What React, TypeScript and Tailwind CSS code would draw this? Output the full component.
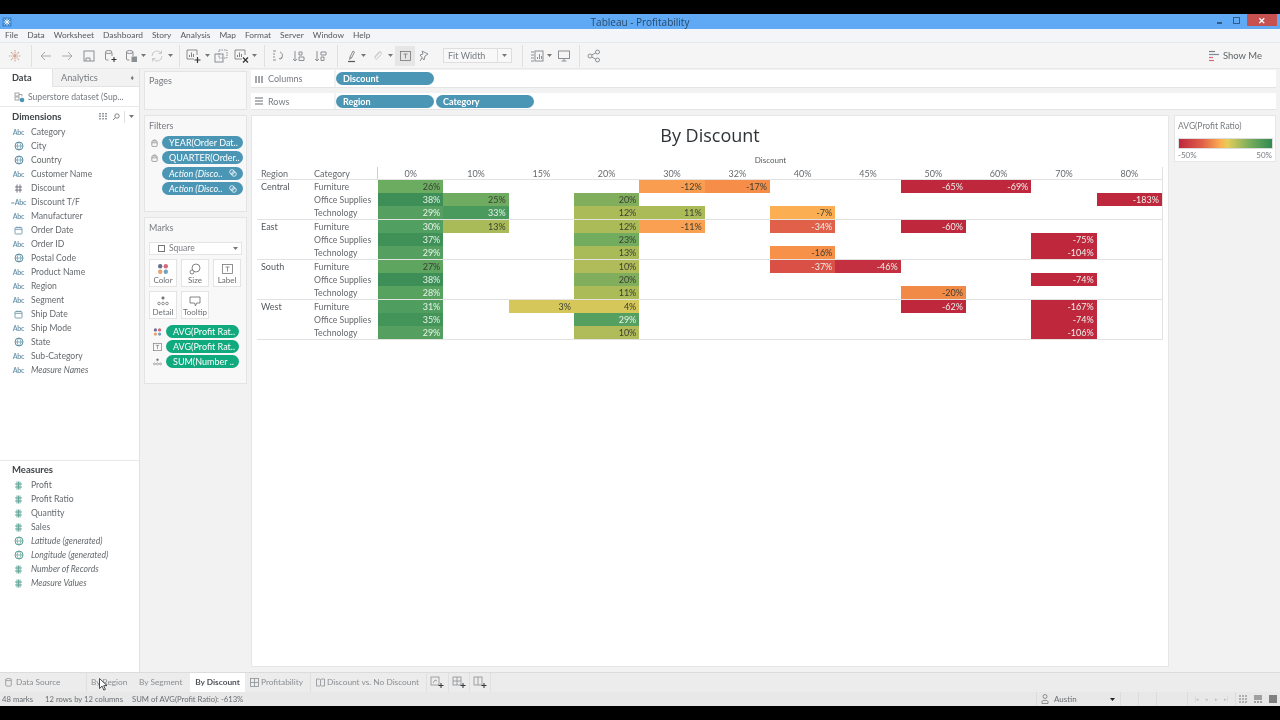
import React from "react";

const G = "#8a8f94";
type IP = { c?: string; s?: number };

const Svg = ({ s = 14, children }: { s?: number; children: React.ReactNode }) => (
  <svg width={s} height={s} viewBox="0 0 14 14" fill="none" stroke={G} strokeWidth="1" className="shrink-0">
    {children}
  </svg>
);

const Caret = () => (
  <svg width="5" height="3" viewBox="0 0 5 3" className="shrink-0"><path d="M0 0h5L2.5 3z" fill="#777" /></svg>
);

const Globe = ({ c = "#5c8fa6" }: IP) => (
  <svg width="10" height="10" viewBox="0 0 10 10" fill="none" stroke={c} strokeWidth="1">
    <circle cx="5" cy="5" r="4" /><path d="M1 5h8M5 1c-2.4 2.4-2.4 5.6 0 8M5 1c2.4 2.4 2.4 5.6 0 8" strokeWidth=".7" />
  </svg>
);
const Hash = ({ c = "#5c8fa6", dbl = false }: IP & { dbl?: boolean }) => (
  <svg width="9" height="9" viewBox="0 0 9 9" fill="none" stroke={c} strokeWidth=".9">
    <path d="M1 3h7M1 6h7" />
    {dbl ? <path d="M3 .5v8M4.5 .5v8M6 .5v8" /> : <path d="M3 .5v8M6 .5v8" />}
  </svg>
);
const Cal = ({ c = "#6f97ab" }: IP) => (
  <svg width="9" height="9" viewBox="0 0 9 9" fill="none" stroke={c} strokeWidth=".9">
    <rect x="1" y="1.5" width="7" height="6.5" rx=".8" /><path d="M1 3.3h7M3 .5v1.5M6 .5v1.5" />
  </svg>
);
const Abc = ({ pre = false }: { pre?: boolean }) => (
  <span className="text-[7px] leading-none font-bold text-[#6f98ad] tracking-[-0.2px]">{pre ? "=Abc" : "Abc"}</span>
);

type Kind = "abc" | "eq" | "globe" | "hash" | "cal" | "mhash" | "mglobe";
const FieldIcon = ({ k }: { k: Kind }) => {
  if (k === "abc") return <Abc />;
  if (k === "eq") return <Abc pre />;
  if (k === "globe") return <Globe />;
  if (k === "hash") return <Hash c="#667" />;
  if (k === "cal") return <Cal />;
  if (k === "mhash") return <Hash c="#5aa193" dbl />;
  return <Globe c="#5aa193" />;
};

const Field = ({ k, name, it = false }: { k: Kind; name: string; it?: boolean }) => (
  <div className="flex items-center h-[14px]">
    <div className="w-[31px] pl-[9px] pr-[3px] flex justify-center items-center shrink-0"><FieldIcon k={k} /></div>
    <span className={`text-[8.6px] leading-none text-[#666a6e] whitespace-nowrap ${it ? "italic" : ""}`}>{name}</span>
  </div>
);

const dims: [Kind, string, boolean?][] = [
  ["abc", "Category"], ["globe", "City"], ["globe", "Country"], ["abc", "Customer Name"], ["hash", "Discount"],
  ["eq", "Discount T/F"], ["abc", "Manufacturer"], ["cal", "Order Date"], ["abc", "Order ID"], ["globe", "Postal Code"],
  ["abc", "Product Name"], ["abc", "Region"], ["abc", "Segment"], ["cal", "Ship Date"], ["abc", "Ship Mode"],
  ["globe", "State"], ["abc", "Sub-Category"], ["abc", "Measure Names", true],
];
const meas: [Kind, string, boolean?][] = [
  ["mhash", "Profit"], ["mhash", "Profit Ratio"], ["mhash", "Quantity"], ["mhash", "Sales"],
  ["mglobe", "Latitude (generated)", true], ["mglobe", "Longitude (generated)", true],
  ["mhash", "Number of Records", true], ["mhash", "Measure Values", true],
];

const Dots = () => (
  <svg width="12" height="12" viewBox="0 0 12 12">
    <circle cx="3.2" cy="3.2" r="2.2" fill="#6a6f8e" /><circle cx="8.8" cy="3.2" r="2.2" fill="#d9687a" />
    <circle cx="3.2" cy="8.8" r="2.2" fill="#eda06a" /><circle cx="8.8" cy="8.8" r="2.2" fill="#6fa3c4" />
  </svg>
);
const LabelT = () => (
  <svg width="11" height="10" viewBox="0 0 11 10" fill="none" stroke="#777" strokeWidth=".8">
    <rect x=".5" y=".5" width="10" height="9" /><path d="M3.5 3h4M5.5 3v4.5" />
  </svg>
);
const DetailI = () => (
  <svg width="12" height="10" viewBox="0 0 12 10" fill="none" stroke="#777" strokeWidth=".8">
    <circle cx="6" cy="2" r="1.2" fill="#777" /><circle cx="2" cy="7.5" r="1.3" /><circle cx="6" cy="7.5" r="1.3" /><circle cx="10" cy="7.5" r="1.3" />
  </svg>
);
const SizeI = () => (
  <svg width="12" height="12" viewBox="0 0 12 12" fill="none" stroke="#777" strokeWidth=".9">
    <circle cx="7" cy="5" r="4" /><circle cx="3" cy="9" r="2" fill="#fff" />
  </svg>
);
const TipI = () => (
  <svg width="12" height="11" viewBox="0 0 12 11" fill="none" stroke="#777" strokeWidth=".9">
    <path d="M1 1h10v6H7.5L6.5 10 5.5 7H1z" />
  </svg>
);

const MarkBtn = ({ label, children }: { label: string; children: React.ReactNode }) => (
  <div className="w-[28px] h-[28px] bg-white border border-[#e4e4e4] flex flex-col items-center">
    <div className="h-[15px] flex items-center justify-center pt-[3px]">{children}</div>
    <span className="text-[8px] leading-[11px] text-[#6a6e72] whitespace-nowrap">{label}</span>
  </div>
);

const Pill = ({ text, bg, w, italic = false, link = false }: { text: string; bg: string; w: string; italic?: boolean; link?: boolean }) => (
  <div className={`${w} ${bg} h-[13px] rounded-full flex items-center pl-[7px] pr-[6px] justify-between text-white text-[9px] leading-none whitespace-nowrap overflow-hidden ${italic ? "italic" : ""}`}>
    <span>{text}</span>
    {link && (
      <svg width="8" height="8" viewBox="0 0 8 8" fill="none" stroke="#fff" strokeWidth=".8"><circle cx="3" cy="3" r="2.3" /><circle cx="5" cy="5" r="2.3" /></svg>
    )}
  </div>
);

const Lock = () => (
  <svg width="7" height="8" viewBox="0 0 7 8" fill="none" stroke="#8a8f94" strokeWidth=".8" className="shrink-0">
    <rect x=".8" y="2" width="5.4" height="5.4" rx=".8" /><path d="M1 3.8h5M2 2c0-1.6 3-1.6 3 0" />
  </svg>
);

const ShelfPill = ({ text, w = "w-[98px]" }: { text: string; w?: string }) => (
  <div className={`${w} h-[13px] rounded-full bg-[#4a96b4] text-white text-[9px] font-bold leading-none flex items-center pl-[7px]`}>{text}</div>
);

const Cols = ["0%", "10%", "15%", "20%", "30%", "32%", "40%", "45%", "50%", "60%", "70%", "80%"];
type Row = { cat: string; cells: Record<number, number> };
const data: { region: string; rows: Row[] }[] = [
  { region: "Central", rows: [
    { cat: "Furniture", cells: { 0: 26, 4: -12, 5: -17, 8: -65, 9: -69 } },
    { cat: "Office Supplies", cells: { 0: 38, 1: 25, 3: 20, 11: -183 } },
    { cat: "Technology", cells: { 0: 29, 1: 33, 3: 12, 4: 11, 6: -7 } },
  ] },
  { region: "East", rows: [
    { cat: "Furniture", cells: { 0: 30, 1: 13, 3: 12, 4: -11, 6: -34, 8: -60 } },
    { cat: "Office Supplies", cells: { 0: 37, 3: 23, 10: -75 } },
    { cat: "Technology", cells: { 0: 29, 3: 13, 6: -16, 10: -104 } },
  ] },
  { region: "South", rows: [
    { cat: "Furniture", cells: { 0: 27, 3: 10, 6: -37, 7: -46 } },
    { cat: "Office Supplies", cells: { 0: 38, 3: 20, 10: -74 } },
    { cat: "Technology", cells: { 0: 28, 3: 11, 8: -20 } },
  ] },
  { region: "West", rows: [
    { cat: "Furniture", cells: { 0: 31, 2: 3, 3: 4, 8: -62, 10: -167 } },
    { cat: "Office Supplies", cells: { 0: 35, 3: 29, 10: -74 } },
    { cat: "Technology", cells: { 0: 29, 3: 10, 10: -106 } },
  ] },
];

const colorFor = (v: number): string => {
  const m: Record<number, string> = {
    26: "#6bac60", 38: "#3d8f57", 29: "#55a061", 25: "#6fab60", 20: "#80ae5c", 33: "#4a9a5e", 12: "#aabb58", 11: "#abbb58",
    30: "#52a061", 13: "#a8bb58", 37: "#3f9158", 23: "#72ac5f", 27: "#5ea55f", 10: "#b0bc59", 28: "#58a260", 31: "#4f9e60",
    35: "#439459", 3: "#d6c75a", 4: "#d6c75a",
    [-7]: "#fbae52", [-11]: "#f9a052", [-12]: "#f99d50", [-16]: "#f79049", [-17]: "#f68e49", [-20]: "#f28a47", [-34]: "#e0604a", [-37]: "#da4f46", [-46]: "#c4303f",
  };
  return m[v] ?? "#bf273d";
};
const lightText = (v: number) =>
  v <= -34 || [38, 29, 33, 30, 37, 28, 31, 35].includes(v);

const TabIconSheet = () => (
  <svg width="9" height="9" viewBox="0 0 9 9" fill="none" stroke="#8a8f94" strokeWidth=".8"><rect x=".5" y=".5" width="8" height="8" /><path d="M.5 4.5h8M4.5 .5v8" /></svg>
);
const TabIconBook = () => (
  <svg width="9" height="9" viewBox="0 0 9 9" fill="none" stroke="#8a8f94" strokeWidth=".8"><path d="M.5 1h3l1 1 1-1h3v7h-3l-1-.5-1 .5h-3zM4.5 2v5.5" /></svg>
);
const AddTab = ({ kind }: { kind: "a" | "b" | "c" }) => (
  <svg width="15" height="13" viewBox="0 0 15 13" fill="none" stroke="#8a8f94" strokeWidth=".8">
    <rect x="1" y="1" width="8" height="8" />
    {kind === "a" && <path d="M3 7l2-3 2 1" />}
    {kind === "b" && <path d="M1 5h8M5 1v8" />}
    {kind === "c" && <path d="M5 1v8" />}
    <path d="M11 7v5M8.5 9.5h5" stroke="#333" strokeWidth="1" />
  </svg>
);

const Sep = ({ ml }: { ml: string }) => <div className={`w-px h-[22px] bg-[#e0e0e0] ${ml} shrink-0`} />;
const Tool = ({ ml, children }: { ml: string; children: React.ReactNode }) => <div className={`w-[14px] h-[22px] ${ml} flex items-center justify-center shrink-0`}>{children}</div>;
const Drop = ({ ml }: { ml: string }) => <div className={`w-[6px] h-[22px] ${ml} flex items-center justify-center shrink-0`}><Caret /></div>;

const BarAdd = ({ mark }: { mark: "plus" | "x" }) => (
  <svg width="15" height="14" viewBox="0 0 15 14" fill="none" stroke="#7d8287" strokeWidth=".9" className="shrink-0">
    <path d="M11 1H1v9h7M11 1v5" />
    <path d="M3.5 8V6M5.5 8V3.5M7.5 8V5" strokeWidth="1" />
    {mark === "plus" && <path d="M11.5 8v6M8.5 11h6" stroke="#333" strokeWidth="1.2" />}
    {mark === "x" && <path d="M9 8.5l5 5M14 8.5l-5 5" stroke="#333" strokeWidth="1.2" />}
  </svg>
);

export default function App() {
  return (
    <div className="w-[1280px] h-[720px] overflow-hidden flex flex-col bg-black relative font-['Lato','Noto_Sans',sans-serif] blur-[0.3px]">
      <div className="h-[14px] bg-black shrink-0" />
      {/* title */}
      <div className="h-[15px] bg-[#5fa9f5] flex items-center justify-between shrink-0">
        <div className="pl-[2px] w-[200px]">
          <svg width="10" height="10" viewBox="0 0 10 10" stroke="#fff" strokeWidth=".9" fill="none"><rect x=".5" y=".5" width="9" height="9" fill="#3f86cc" stroke="none" /><path d="M5 1.5v7M1.5 5h7M2.5 2.5l5 5M7.5 2.5l-5 5" /></svg>
        </div>
        <span className="text-[10px] leading-none text-[#274a6b] font-['Open_Sans',sans-serif]">Tableau - Profitability</span>
        <div className="w-[200px] flex items-start justify-end h-full pr-[3px]">
          <div className="w-[5px] h-[2px] bg-[#335b85] mt-[8px] mr-[11px]" />
          <div className="w-[7px] h-[7px] border border-[#335b85] mt-[3px] mr-[7px]" />
          <div className="w-[30px] h-[12px] bg-[#c75050] flex items-center justify-center text-white text-[9px] font-bold leading-none">✕</div>
        </div>
      </div>
      {/* menu */}
      <div className="h-[14px] bg-[#f3f5f8] flex items-center pl-[5px] gap-[9px] shrink-0 text-[8.4px] leading-none text-[#555a60] border-b border-[#e6e8ea]">
        {["File", "Data", "Worksheet", "Dashboard", "Story", "Analysis", "Map", "Format", "Server", "Window", "Help"].map((m) => (
          <span key={m}>{m}</span>
        ))}
      </div>
      {/* toolbar */}
      <div className="h-[26px] bg-[#f5f5f5] flex items-center shrink-0 pl-[4px] border-b border-[#e8e8e8]">
        <div className="w-[22px] h-[22px] flex items-center justify-center shrink-0">
          <svg width="12" height="12" viewBox="0 0 12 12" stroke="#d0a68f" strokeWidth="1.1" strokeDasharray="1.4 .6"><path d="M6 0v12M0 6h12M2 2l8 8M10 2l-8 8" /></svg>
        </div>
        <Sep ml="ml-[5px]" />
        <Tool ml="ml-[7px]"><Svg><path d="M12 7H2M6 3L2 7l4 4" stroke="#a5a9ad" /></Svg></Tool>
        <Tool ml="ml-[7px]"><Svg><path d="M2 7h10M8 3l4 4-4 4" stroke="#a5a9ad" /></Svg></Tool>
        <Tool ml="ml-[8px]"><Svg><rect x="2" y="2" width="10" height="10" /><path d="M4 12V9h4v3" /></Svg></Tool>
        <Tool ml="ml-[7px]"><Svg><path d="M2.5 4v6c0 1 1 1 3 1M9 4v3" /><ellipse cx="5.7" cy="3" rx="3.3" ry="1.5" /><path d="M11 8v5M8.5 10.5h5" stroke="#333" strokeWidth="1.1" /></Svg></Tool>
        <Tool ml="ml-[7px]"><Svg><path d="M2.5 3v7c0 1 1 1 3 1M9 3v4" /><ellipse cx="5.7" cy="3" rx="3.3" ry="1.5" /><rect x="8" y="8" width="4.5" height="4.5" fill="#8a8f94" /></Svg></Tool>
        <Drop ml="ml-[2px]" />
        <Tool ml="ml-[4px]"><Svg><path d="M2 7a5 5 0 0 1 9-3M12 7a5 5 0 0 1-9 3" stroke="#c5c8cb" /><path d="M11.5 1.5v3h-3M2.5 12.5v-3h3" stroke="#c5c8cb" /></Svg></Tool>
        <Drop ml="ml-[3px]" />
        <Sep ml="ml-[6px]" />
        <Tool ml="ml-[6px]"><BarAdd mark="plus" /></Tool>
        <Drop ml="ml-[4px]" />
        <Tool ml="ml-[4px]"><Svg><rect x="5" y="1" width="8" height="8" strokeDasharray="1.5 1" /><rect x="1" y="5" width="8" height="8" /></Svg></Tool>
        <Tool ml="ml-[6px]"><BarAdd mark="x" /></Tool>
        <Drop ml="ml-[3px]" />
        <Sep ml="ml-[7px]" />
        <Tool ml="ml-[6px]"><Svg><path d="M2 2h3M2 5h2M2 8h2M9 3c3 1 3 5 1 7M10 10l-2-.5M10 10l.5-2" /><path d="M2 11h3" /></Svg></Tool>
        <Tool ml="ml-[7px]"><Svg><path d="M3 2v10M1 10l2 2 2-2" /><path d="M7 3h3v3H7zM7 8h5v3.5H7z" /></Svg></Tool>
        <Tool ml="ml-[8px]"><Svg><path d="M3 2v10M1 10l2 2 2-2" /><path d="M7 3h5v3H7zM7 8h3v3.5H7z" /></Svg></Tool>
        <Sep ml="ml-[9px]" />
        <Tool ml="ml-[7px]"><Svg><path d="M5 8l3-6 1.5 1L6.5 9zM5 8l-.5 2.5L6.5 9" /><path d="M3 12.5h7" stroke="#555" strokeWidth="1.2" /></Svg></Tool>
        <Drop ml="ml-[1px]" />
        <Tool ml="ml-[5px]"><Svg><path d="M9 3L4.5 8c-1 1.5 1 3 2 1.5L10 5.5c1.5-2-1-4-2.5-2L3.5 8" stroke="#c5c8cb" /></Svg></Tool>
        <Drop ml="ml-[2px]" />
        <div className="ml-[2px] w-[20px] h-[20px] bg-[#e6e6e6] flex items-center justify-center shrink-0">
          <LabelT />
        </div>
        <Tool ml="ml-[2px]"><Svg><path d="M5 2l6 3-3 2-1 4-4-5 3-1zM3 12l2-3" /></Svg></Tool>
        <div className="ml-[12px] w-[69px] h-[15px] bg-[#f8f8f8] border border-[#dedede] flex items-center justify-between pl-[4px] pr-[4px] text-[9px] text-[#777b80] leading-none shrink-0">
          <span>Fit Width</span><div className="border-l border-[#dedede] h-full flex items-center pl-[4px]"><Caret /></div>
        </div>
        <Sep ml="ml-[10px]" />
        <Tool ml="ml-[7px]"><Svg><path d="M1 3h3M1 6h3M1 9h3M1 12h3" /><rect x="5" y="2" width="8" height="10" /><path d="M7.5 10V8M9.5 10V5M11.5 10V7" /></Svg></Tool>
        <Drop ml="ml-[2px]" />
        <Tool ml="ml-[5px]"><Svg><rect x="1.5" y="2" width="11" height="7.5" /><path d="M7 9.5V12M4.5 12h5" /></Svg></Tool>
        <Sep ml="ml-[8px]" />
        <Tool ml="ml-[7px]"><Svg><circle cx="3" cy="7" r="2" /><circle cx="10.5" cy="3" r="2" /><circle cx="10.5" cy="11" r="2" /><path d="M4.8 6l4-2.2M4.8 8l4 2.2" /></Svg></Tool>
        <div className="flex-1" />
        <div className="flex items-center gap-[4px] pr-[18px] text-[9.5px] text-[#5f6468] leading-none">
          <svg width="10" height="12" viewBox="0 0 10 12" strokeWidth="1.2"><path d="M0 1.5h6" stroke="#7a7f88" /><path d="M0 4.5h10" stroke="#7a8aa0" /><path d="M0 7.5h4" stroke="#d9687a" /><path d="M0 10.5h5" stroke="#d9687a" /></svg>
          <span>Show Me</span>
        </div>
      </div>

      {/* body */}
      <div className="h-[603px] flex bg-[#f2f2f2] shrink-0">
        {/* data pane */}
        <div className="w-[140px] bg-white border-r border-[#e2e2e2] flex flex-col shrink-0">
          <div className="h-[18px] flex text-[9.2px] leading-none shrink-0">
            <div className="w-[52px] flex items-center pl-[12px] font-bold text-[#3f4448] bg-white">Data</div>
            <div className="flex-1 flex items-center justify-between pl-[8px] pr-[5px] bg-[#f2f2f2] border-b border-l border-[#e4e4e4] text-[#777b80]">
              <span>Analytics</span>
              <span className="text-[7px]">♦</span>
            </div>
          </div>
          <div className="h-[20px] flex items-center pl-[14px] pt-[2px] gap-[3px] border-b border-[#e8e8e8] text-[8.6px] text-[#777b80] leading-none shrink-0">
            <svg width="11" height="11" viewBox="0 0 11 11" fill="none" stroke="#8a8f94" strokeWidth=".8"><rect x="1" y="1" width="4" height="3" /><rect x="1" y="5" width="4" height="3" /><path d="M5 2.5h3v2" /><circle cx="8" cy="8" r="2.3" fill="#4a96b4" stroke="none" /></svg>
            <span>Superstore dataset (Sup...</span>
          </div>
          <div className="h-[354px] shrink-0 border-b border-[#e8e8e8] flex flex-col">
            <div className="h-[17px] flex items-center justify-between pl-[12px] pr-[5px] mt-[1px] shrink-0">
              <span className="text-[9.5px] font-bold leading-none text-[#3f4448]">Dimensions</span>
              <div className="flex items-center gap-[4px]">
                <svg width="9" height="7" viewBox="0 0 9 7" fill="#9a9ea2"><path d="M0 0h2v1.5H0zM3 0h2v1.5H3zM6 0h2v1.5H6zM0 2.5h2V4H0zM3 2.5h2V4H3zM6 2.5h2V4H6zM0 5h2v1.5H0zM3 5h2v1.5H3zM6 5h2v1.5H6z" /></svg>
                <svg width="8" height="8" viewBox="0 0 8 8" fill="none" stroke="#777" strokeWidth=".9"><circle cx="5" cy="3" r="2.2" /><path d="M3.4 4.6L1 7" /></svg>
                <div className="w-px h-[12px] bg-[#e0e0e0]" />
                <Caret />
              </div>
            </div>
            <div className="flex flex-col">
              {dims.map(([k, n, it]) => <Field key={n} k={k} name={n} it={it} />)}
            </div>
          </div>
          <div className="h-[16px] flex items-center pl-[12px] mt-[1px] pb-[1px] text-[9.5px] font-bold text-[#3f4448] leading-none shrink-0">Measures</div>
          <div className="flex flex-col">
            {meas.map(([k, n, it]) => <Field key={n} k={k} name={n} it={it} />)}
          </div>
        </div>

        {/* cards column */}
        <div className="w-[103px] ml-[4px] flex flex-col gap-[5px] pt-[2px] shrink-0">
          <div className="h-[39px] bg-[#f8f8f8] border border-[#e4e4e4] pl-[4px] pt-[4px] text-[9px] leading-none text-[#777b80]">Pages</div>
          <div className="h-[97px] bg-[#f8f8f8] border border-[#e4e4e4] pt-[5px] flex flex-col">
            <span className="pl-[4px] text-[9px] leading-none text-[#777b80]">Filters</span>
            <div className="flex flex-col gap-[2.4px] mt-[6px] pl-[6px]">
              <div className="flex items-center"><div className="w-[11px]"><Lock /></div><Pill text="YEAR(Order Dat.." bg="bg-[#4a96b4]" w="w-[81px]" /></div>
              <div className="flex items-center"><div className="w-[11px]"><Lock /></div><Pill text="QUARTER(Order.." bg="bg-[#4a96b4]" w="w-[81px]" /></div>
              <div className="flex items-center"><div className="w-[11px]" /><Pill text="Action (Disco.." bg="bg-[#4a96b4]" w="w-[81px]" italic link /></div>
              <div className="flex items-center"><div className="w-[11px]" /><Pill text="Action (Disco.." bg="bg-[#4a96b4]" w="w-[81px]" italic link /></div>
            </div>
          </div>
          <div className="h-[167px] bg-[#f8f8f8] border border-[#e4e4e4] pt-[5px] flex flex-col">
            <span className="pl-[4px] text-[9px] leading-none text-[#777b80]">Marks</span>
            <div className="ml-[4px] mt-[10px] w-[93px] h-[13px] bg-white border border-[#e4e4e4] flex items-center justify-between pl-[8px] pr-[3px] text-[8.5px] text-[#777b80] leading-none">
              <span className="flex items-center gap-[4px]"><span className="w-[7px] h-[7px] border border-[#777]" />Square</span>
              <Caret />
            </div>
            <div className="ml-[4px] mt-[4px] flex flex-wrap gap-x-[4px] gap-y-[4px] w-[93px]">
              <MarkBtn label="Color"><Dots /></MarkBtn>
              <MarkBtn label="Size"><SizeI /></MarkBtn>
              <MarkBtn label="Label"><LabelT /></MarkBtn>
              <MarkBtn label="Detail"><DetailI /></MarkBtn>
              <MarkBtn label="Tooltip"><TipI /></MarkBtn>
            </div>
            <div className="flex flex-col gap-[2px] mt-[6px] pl-[8px]">
              <div className="flex items-center gap-[4px]"><div className="w-[9px] flex justify-center [&>svg]:w-[10px]"><Dots /></div><Pill text="AVG(Profit Rat.." bg="bg-[#11a97e]" w="w-[73px]" /></div>
              <div className="flex items-center gap-[4px]"><div className="w-[9px] flex justify-center [&>svg]:w-[9px]"><LabelT /></div><Pill text="AVG(Profit Rat.." bg="bg-[#11a97e]" w="w-[73px]" /></div>
              <div className="flex items-center gap-[4px]"><div className="w-[9px] flex justify-center [&>svg]:w-[10px]"><DetailI /></div><Pill text="SUM(Number .." bg="bg-[#11a97e]" w="w-[73px]" /></div>
            </div>
          </div>
        </div>

        {/* main */}
        <div className="w-[1025px] ml-[4px] pt-[1px] flex flex-col shrink-0">
          <div className="h-[18px] flex items-center bg-white border-b border-[#e4e4e4] shrink-0">
            <div className="w-[85px] h-full flex items-center gap-[5px] pl-[4px] border-r-[2px] border-[#f2f2f2] text-[9px] leading-none text-[#777b80]">
              <svg width="8" height="8" viewBox="0 0 8 8" stroke="#6a6e72" strokeWidth="1.2"><path d="M1 1v7M4 1v7M7 1v7" /></svg>Columns
            </div>
            <ShelfPill text="Discount" />
          </div>
          <div className="h-[17px] mt-[5px] flex items-center bg-white border-b border-[#e4e4e4] shrink-0">
            <div className="w-[85px] h-full flex items-center gap-[5px] pl-[4px] border-r-[2px] border-[#f2f2f2] text-[9px] leading-none text-[#777b80]">
              <svg width="8" height="8" viewBox="0 0 8 8" stroke="#6a6e72" strokeWidth="1.2"><path d="M0 1h8M0 4h8M0 7h8" /></svg>Rows
            </div>
            <div className="flex gap-[2px]"><ShelfPill text="Region" /><ShelfPill text="Category" /></div>
          </div>
          <div className="flex gap-[5px] mt-[5px] shrink-0">
            {/* canvas */}
            <div className="w-[918px] h-[552px] bg-white border border-[#e6e6e6] px-[5px] flex flex-col">
              <div className="h-[37px] flex items-end justify-center shrink-0">
                <span className="text-[18px] leading-[26px] text-[#2e3338] font-['Open_Sans',sans-serif] translate-y-[-5px]">By Discount</span>
              </div>
              <div className="h-[14px] pl-[121px] w-[906px] flex items-center justify-center text-[8px] leading-none text-[#555a5e] shrink-0">Discount</div>
              <div className="w-[906px] border-r border-[#e2e2e2] flex flex-col shrink-0">
                <div className="h-[13px] box-border flex items-center text-[9px] leading-none text-[#666a6e] border-b border-[#e2e2e2]">
                  <span className="w-[57px] pl-[4px]">Region</span>
                  <span className="w-[64px]">Category</span>
                  <div className="flex-1 -ml-px grid grid-cols-12 border-l border-[#cfcfcf] h-full items-center text-center">
                    {Cols.map((c) => <span key={c}>{c}</span>)}
                  </div>
                </div>
                {data.map((g) => (
                  <div key={g.region} className="h-[40px] box-border flex border-b border-[#e2e2e2]">
                    <span className="w-[57px] pl-[4px] pt-[2px] text-[9px] leading-none text-[#555a5e] shrink-0">{g.region}</span>
                    <div className="flex-1 flex flex-col">
                      {g.rows.map((r) => (
                        <div key={r.cat} className="flex-1 flex items-center">
                          <span className="w-[64px] pt-[1px] text-[8.7px] leading-none text-[#666a6e] shrink-0">{r.cat}</span>
                          <div className="flex-1 grid grid-cols-12 h-full">
                            {Cols.map((_, i) => {
                              const v = r.cells[i];
                              if (v === undefined) return <div key={i} />;
                              return (
                                <div
                                  key={i}
                                  style={{ backgroundColor: colorFor(v) }}
                                  className={`flex items-center justify-end pr-[3px] text-[9px] leading-none ${lightText(v) ? "text-[#e9f2ea]" : "text-[#3b3f33]"}`}
                                >
                                  {v}%
                                </div>
                              );
                            })}
                          </div>
                        </div>
                      ))}
                    </div>
                  </div>
                ))}
              </div>
            </div>
            {/* legend */}
            <div className="w-[102px] h-[47px] bg-white border border-[#e6e6e6] px-[3px] pt-[6px] flex flex-col">
              <span className="text-[8.5px] leading-none text-[#777b80]">AVG(Profit Ratio)</span>
              <div className="h-[11px] mt-[7px] w-[95px] border border-[#ddd] bg-[linear-gradient(to_right,#bf273d,#e0604a_25%,#fbb050_45%,#e5cd5a_52%,#7cae5c_75%,#2f8a52)]" />
              <div className="flex justify-between text-[8px] leading-none text-[#777b80] mt-[2px]"><span>-50%</span><span>50%</span></div>
            </div>
          </div>
        </div>
      </div>

      {/* tabs */}
      <div className="h-[20px] bg-[#ececec] border-t border-[#dcdcdc] flex items-stretch text-[8.3px] leading-none text-[#8a8e92] whitespace-nowrap shrink-0">
        <div className="w-[87px] flex items-center gap-[4px] pl-[5px] border-r border-[#e0e0e0]">
          <svg width="7" height="9" viewBox="0 0 7 9" fill="none" stroke="#8a8f94" strokeWidth=".8"><ellipse cx="3.5" cy="1.6" rx="2.8" ry="1.1" /><path d="M.7 1.6v5.8c0 1 5.6 1 5.6 0V1.6" /></svg>
          Data Source
        </div>
        <div className="w-[45px] flex items-center pl-[4px]">By Region</div>
        <div className="w-[58px] flex items-center pl-[7px]">By Segment</div>
        <div className="w-[55px] flex items-center justify-center bg-white font-bold text-[#4f5358]">By Discount</div>
        <div className="w-[66px] flex items-center gap-[2px] pl-[5px] border-r border-[#e0e0e0]"><TabIconSheet />Profitability</div>
        <div className="w-[116px] flex items-center gap-[2px] pl-[5px] border-r border-[#e0e0e0]"><TabIconBook />Discount vs. No Discount</div>
        <div className="w-[22px] flex items-center justify-center border-r border-[#e0e0e0]"><AddTab kind="a" /></div>
        <div className="w-[21px] flex items-center justify-center border-r border-[#e0e0e0]"><AddTab kind="b" /></div>
        <div className="w-[21px] flex items-center justify-center border-r border-[#e0e0e0]"><AddTab kind="c" /></div>
      </div>
      {/* status */}
      <div className="h-[14px] bg-[#e8e8e8] flex items-center text-[7.7px] leading-none text-[#6a6e72] shrink-0 [&>span]:pt-[1px]">
        <span className="ml-[2px] w-[43px]">48 marks</span>
        <span className="w-[87px]">12 rows by 12 columns</span>
        <span>SUM of AVG(Profit Ratio): -613%</span>
        <div className="flex-1" />
        <div className="w-[85px] h-full border-l border-r border-[#dcdcdc] flex items-center pl-[4px] pr-[5px] justify-between">
          <span className="flex items-center gap-[5px] text-[8px]">
            <svg width="8" height="10" viewBox="0 0 8 10" fill="none" stroke="#777" strokeWidth=".8"><circle cx="4" cy="2.5" r="2" /><path d="M1 9.5V7.5C1 6 7 6 7 7.5v2z" /></svg>
            Austin
          </span>
          <svg width="5" height="3" viewBox="0 0 5 3"><path d="M0 0h5L2.5 3z" fill="#222" /></svg>
        </div>
        <div className="w-[18px] h-full border-r border-[#dcdcdc]" />
        <div className="w-[18px] h-full border-r border-[#dcdcdc]" />
        <div className="w-[31px] h-full border-r border-[#dcdcdc]" />
        <div className="w-[48px] h-full flex items-center justify-around px-[4px] border-r border-[#dcdcdc]">
          {["|◂", "◂", "▸", "▸|"].map((t) => <span key={t} className="text-[5px] text-[#bdbdbd]">{t}</span>)}
        </div>
        <div className="w-[44px] h-full flex items-center justify-around">
          <svg width="8" height="8" viewBox="0 0 8 8" fill="#b0b0b0"><path d="M0 0h2v2H0zM3 0h2v2H3zM6 0h2v2H6zM0 3h2v2H0zM3 3h2v2H3zM6 3h2v2H6zM0 6h2v2H0zM3 6h2v2H3zM6 6h2v2H6z" /></svg>
          <svg width="8" height="8" viewBox="0 0 8 8" fill="#a0a0a0"><path d="M0 0h8v5H0zM0 6h2v2H0zM3 6h2v2H3zM6 6h2v2H6z" /></svg>
          <div className="w-[8px] h-[8px] bg-[#808080]" />
        </div>
      </div>
      <div className="h-[14px] bg-black shrink-0" />

      {/* cursor */}
      <svg className="absolute left-[99px] top-[678px]" width="9" height="13" viewBox="0 0 9 13">
        <path d="M.5.5v10l2.6-2.4 1.7 4 1.6-.7-1.7-3.8H8z" fill="#fff" stroke="#222" strokeWidth=".8" />
      </svg>
    </div>
  );
}
